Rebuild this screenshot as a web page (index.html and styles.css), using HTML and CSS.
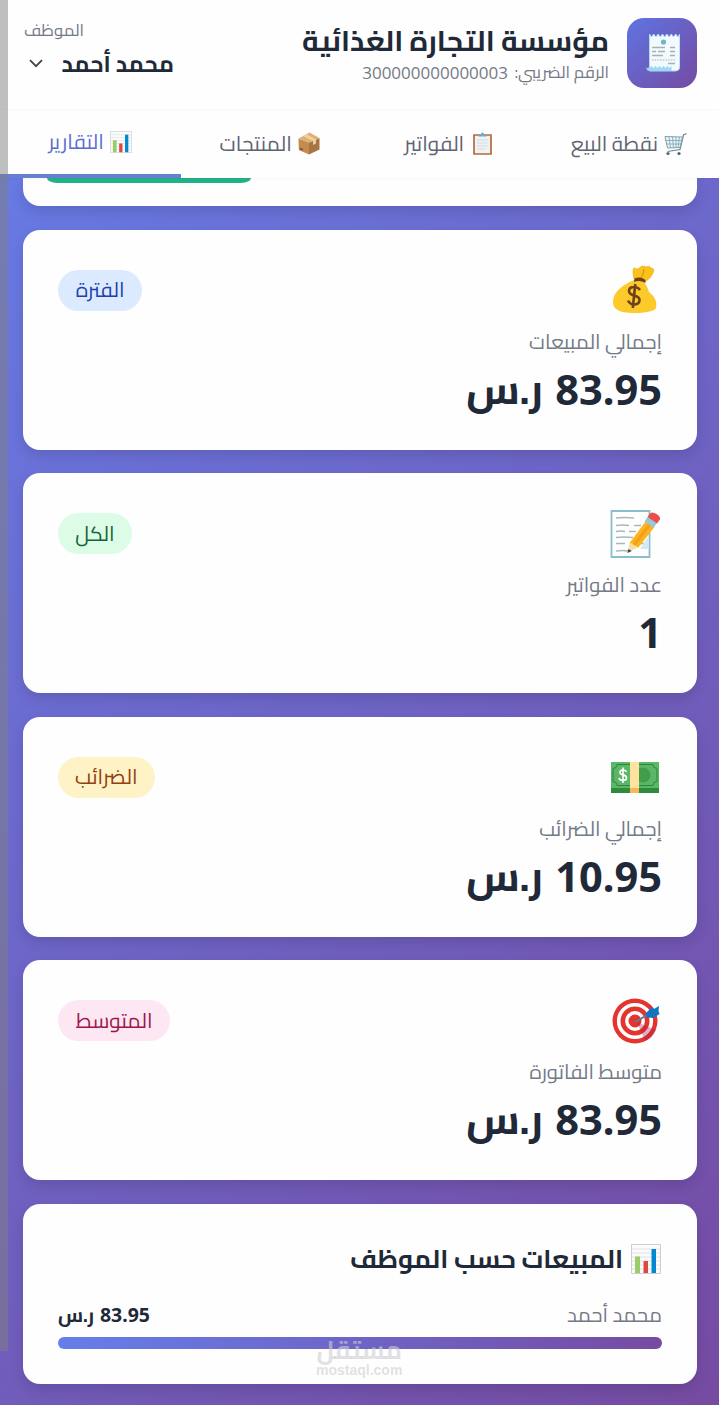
FILE: index.html
```html
<!DOCTYPE html>
<html lang="ar" dir="rtl">
<head>
<meta charset="utf-8">
<title>التقارير</title>
<link rel="stylesheet" href="styles.css">
</head>
<body>
<svg class="defs" width="0" height="0" aria-hidden="true">
  <symbol id="chart" viewBox="0 0 30 30">
    <path d="M.5.5h29v29H.5z" fill="#fafbfb" stroke="#c9cfd2"/>
    <path d="M1 5h28M1 9h28M1 13h28M1 17h28M1 21h28M1 25h28" stroke="#d9dee0" stroke-width=".8"/>
    <path d="M4 12.500h5V29H4z" fill="#9ccc65"/><path d="M12.500 17h4.500v12h-4.500z" fill="#db4a3f"/><path d="M20.500 5h4.500v24h-4.500z" fill="#0288d1"/>
  </symbol>
</svg>
<header class="header">
  <div class="topbar">
    <div class="logo">
      <svg width="35" height="39" viewBox="0 0 35 39"><path d="M4.500 1l2 3 2.200-3 2.200 3 2.200-3 2.200 3 2.200-3 2.200 3 2.200-3 2.200 3 2.200-3 2.200 3 2.200-3 2.200 3 2-3V33q0 5-5 5H4.500z" fill="#f2fafd" stroke="#a8dcf3" stroke-width="1"/><path d="M1 34l1.500 1.500 2-2V38H4q-3-1-3-4zM4.500 35l2-2 2 2 2-2 2 2 2-2 2 2 2-2 2 2 2-2 2 2 2-2 0 5H4.500z" fill="#9ed8f3"/><circle cx="18.500" cy="9" r="2.600" fill="#6fb4c7"/><path d="M7 14.500h13M25 14.500h5M7 18.500h4m2 0h7M25 18.500h5M7 22.500h11M25 22.500h5M23 30.500h7" stroke="#a7b0b4" stroke-width="1.500"/><path d="M7 27h23" stroke="#a7b0b4" stroke-dasharray="1.500 1.200"/></svg>
    </div>
    <div class="company">
      <h1 class="t title">مؤسسة التجارة الغذائية</h1>
      <div class="tax"><span class="t tax-label">الرقم الضريبي:</span><span class="t tax-no">300000000000003</span></div>
    </div>
    <div class="employee">
      <span class="t emp-label">الموظف</span>
      <div class="emp-row"><span class="t emp-name">محمد أحمد</span><svg class="chev" width="14" height="9" viewBox="0 0 14 9"><path d="M1 1.200l6 6 6-6" fill="none" stroke="#3c434d" stroke-width="1.800"/></svg></div>
    </div>
  </div>
  <nav class="tabs">
    <a class="tab tab-pos"><svg width="23" height="24" viewBox="0 0 23 24"><path d="M22.500 1.500L19.500 3 16 17.500 3.500 19.500" fill="none" stroke="#6d8792" stroke-width="1.200"/><path d="M1 4.500L18.500 5 16 15.500 3.500 16z" fill="#e7f3f7" stroke="#7fa3b0"/><path d="M5 5l1.500 11M8.500 5l1 11M12 5v10.500M15.500 5l-1.500 10.500M1.500 8.500h16M2.300 12h14.500" stroke="#7fa3b0" stroke-width=".8"/><circle cx="4" cy="21.500" r="1.600" fill="#52636b"/><circle cx="15" cy="21.500" r="1.600" fill="#52636b"/></svg><span class="t nav-pos">نقطة البيع</span></a>
    <a class="tab tab-inv"><svg width="19" height="23" viewBox="0 0 19 23"><path d="M1 3h17v19H1z" fill="#eef2f4" stroke="#b9693b" stroke-width="1.700"/><path d="M5.500 4.500V2.500H8Q8 .5 9.500.5T11 2.500h2.500v2z" fill="#78a9b8"/><path d="M4 8h11M4 11h11M4 14h11M4 17h8" stroke="#d5dcdf"/></svg><span class="t nav-inv">الفواتير</span></a>
    <a class="tab tab-prod"><svg width="22" height="23" viewBox="0 0 22 23"><path d="M.5 6.500L11 10.500v12L.8 18z" fill="#c28c4f"/><path d="M11 10.500L21.500 6v11.500L11 22.500z" fill="#a87442"/><path d="M.5 6.500L11.500.5l10 5.500L11 10.500z" fill="#deb172"/><path d="M5 4l10 5v4l3-1.400V7.500L8.500 2.200z" fill="#efd19f"/><path d="M2 16.500l3 1.400" stroke="#7b4b25" stroke-width="1.500"/></svg><span class="t nav-prod">المنتجات</span></a>
    <a class="tab tab-rep active"><svg width="22" height="22"><use href="#chart"/></svg><span class="t nav-rep">التقارير</span></a>
  </nav>
</header>
<main class="content">
  <section class="card filter"><div class="apply"></div></section>
  <section class="card stat">
    <div class="stat-top"><svg width="48" height="50" viewBox="0 0 48 50"><path d="M22 14Q20 5 22 3q4 2 6-.5T34 2q3-2 5 1 4 0 2 5-2 5-7 8z" fill="#fcc21b" stroke="#e2a614" stroke-width=".6"/><path d="M32 4q0 6-4 10" fill="none" stroke="#c78d12"/><path d="M22 15Q1 24 1 37q0 11 20 11t23-5q2-9-7-16-2-7-6-11z" fill="#fdca2c"/><path d="M22.500 13.500q6-2.500 11 1.500v3q-6-3.500-11.500-1z" fill="#6d4219"/><path d="M28 25q-2-3-6-3-5 0-5 4 0 3 5 4.500 6 1.500 5.500 5-.5 4-5.500 4-4 0-6-4M23.300 19l-2.500 24" fill="none" stroke="#6d4219" stroke-width="2.600"/></svg><span class="pill blue"><span class="t p1">الفترة</span></span></div>
    <span class="t label l1">إجمالي المبيعات</span>
    <div class="value"><span class="t num">83.95</span><span class="t cur">ر.س</span></div>
  </section>
  <section class="card stat">
    <div class="stat-top"><svg width="50" height="50" viewBox="0 0 50 50"><path d="M1.500 2h38v46h-38z" fill="#fdfefe" stroke="#8bbfce" stroke-width="1.800"/><path d="M6 9q8-1 18 0M6 16.500q7-1 13 0m5 0h7M6 22.500q5-1 9 0m4 0h7M6 28.500q8-1 17 0M6 34.500h9m14 0h5M6 42q7-1 12 0" fill="none" stroke="#b0b5b8" stroke-width="1.400"/><path d="M39 26v14l-9 0z" fill="#d5eaf5"/><path d="M17.500 44l2-10 6 1 2.500 3z" fill="#f6dfa5"/><path d="M17.500 44l.8-4 3.500 2z" fill="#444"/><path d="M19.500 34L36 12l8.500 6L28 39q-2-4-8.500-5z" fill="#fbb51c"/><path d="M22.500 35L39 14l2.500 2-16 21z" fill="#f5a01a"/><path d="M34.500 12.500l3-4.500 9.500 6-3.500 5z" fill="#99c8d5"/><path d="M37.500 8l2-3q2-3 7 0t3 6l-2.500 3.500z" fill="#e8504e"/></svg><span class="pill green"><span class="t p2">الكل</span></span></div>
    <span class="t label l2">عدد الفواتير</span>
    <div class="value"><span class="t one">1</span></div>
  </section>
  <section class="card stat">
    <div class="stat-top"><svg width="50" height="50" viewBox="0 0 50 50"><path d="M1 10h48v31H1z" fill="#2e8b3d"/><path d="M1 10h48v26H1z" fill="#5bb768"/><path d="M7 12.500h36q0 4 4 4v13q-4 0-4 4H7q0-4-4-4v-13q4 0 4-4z" fill="none" stroke="#31843c"/><circle cx="33" cy="23" r="7.500" fill="#439e4c"/><path d="M20 10h9v26h-9z" fill="#fee2a0"/><path d="M20 36h9v5h-9z" fill="#f7b85c"/><path d="M16.500 20q-1-2-3.500-2-3 0-3 2.300 0 2 3 2.600 3.500.6 3.500 3t-3.500 2.500-4-2.400M13 15.500v15.500" fill="none" stroke="#fff" stroke-width="1.600"/></svg><span class="pill yellow"><span class="t p3">الضرائب</span></span></div>
    <span class="t label l3">إجمالي الضرائب</span>
    <div class="value"><span class="t num">10.95</span><span class="t cur">ر.س</span></div>
  </section>
  <section class="card stat">
    <div class="stat-top"><svg width="50" height="50" viewBox="0 0 50 50"><circle cx="25" cy="25" r="22.500" fill="#e5342f"/><circle cx="25" cy="25" r="16.300" fill="none" stroke="#fff" stroke-width="3.600"/><circle cx="25" cy="25" r="8.200" fill="none" stroke="#fff" stroke-width="3.400"/><path d="M27 26L46 34q-3 8-11 11z" fill="#a81d4b" opacity=".35"/><path d="M25 26l14-8" stroke="#5f7d95" stroke-width="2"/><path d="M36 17l6-6 2 2 5-3-.5 5 1 3-6 4-7-.5z" fill="#1275c0"/></svg><span class="pill pink"><span class="t p4">المتوسط</span></span></div>
    <span class="t label l4">متوسط الفاتورة</span>
    <div class="value"><span class="t num">83.95</span><span class="t cur">ر.س</span></div>
  </section>
  <section class="card sales">
    <div class="sales-head"><svg width="30" height="30"><use href="#chart"/></svg><h2 class="t sales-title">المبيعات حسب الموظف</h2></div>
    <div class="sales-row"><span class="t s-name">محمد أحمد</span><div class="s-value"><span class="t s-num">83.95</span><span class="t s-cur">ر.س</span></div></div>
    <div class="bar"></div>
  </section>
</main>
<div class="scroll"></div>
<div class="mark"><span class="t mark-ar">مستقل</span><span class="t mark-en" dir="ltr">mostaql.com</span></div>
</body>
</html>
```
FILE: styles.css
```css
* { box-sizing: border-box; margin: 0; padding: 0; }
body {
  width: 719px; height: 1405px; overflow: hidden; position: relative;
  font-family: "Cairo", "Noto Kufi Arabic", "Noto Sans Arabic", "DejaVu Sans", sans-serif;
  background: linear-gradient(135deg, #667eea 0%, #764ba2 100%);
  color: #1f2937;
}
svg { display: block; flex: none; }
.defs { position: absolute; }
.t { display: block; flex: none; white-space: nowrap; }

.header { height: 178px; background: #fefefe; position: relative; z-index: 2; box-shadow: 0 1px 3px rgba(0,0,0,.04); }
.topbar { height: 110px; padding: 17.500px 22px 0 24px; display: flex; border-bottom: 1px solid #f8f8f9; }
.logo { width: 70px; height: 70px; border-radius: 17px; background: linear-gradient(135deg, #5f74e2, #764ba2); display: flex; align-items: center; justify-content: center; }
.company { margin-right: 18px; padding-top: 3px; }
.title { width: 307px; font-size: 28.800px; line-height: 38px; font-weight: 700; }
.tax { display: flex; gap: 6px; color: #747a86; font-size: 16.700px; line-height: 27px; }
.tax-label { width: 95px; }
.tax-no { width: 146px; font-family: "Open Sans", sans-serif; font-size: 17px; }
.employee { margin-right: auto; }
.emp-label { width: 60px; margin-right: auto; font-size: 16.700px; line-height: 25px; color: #747a86; }
.emp-row { display: flex; justify-content: flex-end; align-items: center; gap: 20px; padding-left: 5px; height: 42px; }
.emp-name { width: 111px; font-size: 23px; line-height: 30px; font-weight: 700; }

.tabs { display: flex; height: 68px; }
.tab { width: 179.500px; display: flex; align-items: center; gap: 6px; color: #5d6470; font-size: 20.700px; line-height: 30px; padding-bottom: 1px; }
.tab-pos { padding-right: 32px; }
.tab-inv { padding-right: 47.500px; gap: 9px; }
.tab-prod { padding-right: 40.500px; }
.tab-rep { padding-right: 49px; width: 181px; }
.active { color: #5b6fd0; border-bottom: 4px solid #667fd0; padding-bottom: 0; }
.nav-pos { width: 87px; }
.nav-inv { width: 60px; }
.nav-prod { width: 72px; }
.nav-rep { width: 57px; }

.content { padding: 0 22px 0 23px; display: flex; flex-direction: column; gap: 23.700px; }
.card { background: #fefefe; border-radius: 17px; box-shadow: 0 6px 14px rgba(0,0,0,.12); }
.filter { height: 28px; border-radius: 0 0 17px 17px; padding-left: 24px; display: flex; justify-content: flex-end; }
.apply { width: 204px; height: 5px; background: #22b287; border-radius: 0 0 12px 12px / 0 0 6px 6px; }
.stat { height: 219.900px; padding: 35px; }
.stat-top { display: flex; justify-content: space-between; align-items: center; height: 51px; padding-right: 2px; }
.pill { height: 41px; border-radius: 21px; padding: 0 17.500px; display: flex; align-items: center; font-size: 20.700px; line-height: 30px; }
.blue { background: #dbeafe; color: #1e40af; }
.green { background: #dcfce7; color: #166534; }
.yellow { background: #fef3c7; color: #92400e; }
.pink { background: #fce7f3; color: #9d174d; }
.p1 { width: 49px; }
.p2 { width: 39px; }
.p3 { width: 62px; }
.p4 { width: 77px; }
.label { font-size: 20.300px; line-height: 30px; margin-top: 11px; color: #747a86; }
.l1 { width: 133px; }
.l2 { width: 96px; }
.l3 { width: 122px; }
.l4 { width: 132px; }
.value { display: flex; gap: 12px; font-size: 41.600px; font-weight: 700; line-height: 56px; margin-top: 4px; }
.num { width: 107px; font-family: "Noto Sans", sans-serif; }
.one { width: 21px; font-family: "Noto Sans", sans-serif; }
.cur { width: 77px; }
.sales { height: 179.500px; padding: 35px; }
.sales-head { display: flex; gap: 8px; height: 40px; align-items: center; padding-right: 1px; }
.sales-title { width: 274px; font-size: 25.800px; line-height: 36px; }
.sales-row { display: flex; justify-content: space-between; margin-top: 21px; height: 36.500px; font-size: 20.200px; line-height: 30px; }
.s-name { width: 95px; color: #747a86; }
.s-value { display: flex; gap: 6px; font-weight: 700; }
.s-num { width: 50px; font-family: "Noto Sans", sans-serif; font-size: 19.500px; }
.s-cur { width: 36px; font-size: 19.500px; }
.bar { height: 12px; border-radius: 6px; background: linear-gradient(90deg, #667eea, #764ba2); }
.scroll { position: absolute; z-index: 3; left: 0; top: 0; width: 8px; height: 1351px; background: rgba(128,128,128,.5); }
.mark { position: absolute; z-index: 3; left: 316px; top: 1337px; width: 86px; color: rgba(206,206,210,.62); font-weight: 700; }
.mark-ar { width: 86px; font-size: 25px; line-height: 26px; }
.mark-en { width: 86px; font-family: "Liberation Sans", sans-serif; font-size: 14px; line-height: 14px; }
```
